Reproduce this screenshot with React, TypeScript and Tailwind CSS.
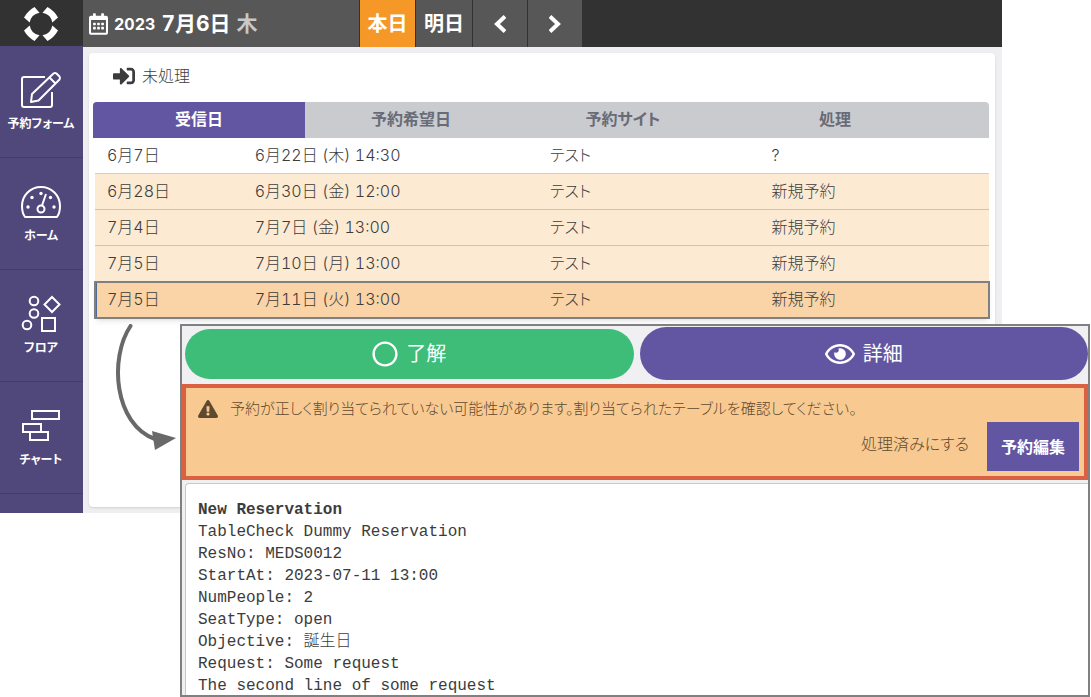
import type { ReactNode } from 'react'
import { FaExclamationTriangle, FaRegCalendarAlt, FaRegCircle, FaRegEye, FaSignInAlt } from 'react-icons/fa'

const rows = [
  { received: '6月7日', wanted: '6月22日 (木) 14:30', site: 'テスト', action: '?' },
  { received: '6月28日', wanted: '6月30日 (金) 12:00', site: 'テスト', action: '新規予約' },
  { received: '7月4日', wanted: '7月7日 (金) 13:00', site: 'テスト', action: '新規予約' },
  { received: '7月5日', wanted: '7月10日 (月) 13:00', site: 'テスト', action: '新規予約' },
  { received: '7月5日', wanted: '7月11日 (火) 13:00', site: 'テスト', action: '新規予約' },
]

const message = [
  'TableCheck Dummy Reservation',
  'ResNo: MEDS0012',
  'StartAt: 2023-07-11 13:00',
  'NumPeople: 2',
  'SeatType: open',
  'Objective: 誕生日',
  'Request: Some request',
  'The second line of some request',
]

function Logo() {
  const petal = 'M0 10.500Q4 3.500 10.500 0L15.500 5.700A12 12 0 0 0 5.700 15.500z'
  return (
    <svg viewBox="0 0 34 34" className="size-[34px]" fill="#fff">
      <path d={petal} />
      <path d={petal} transform="rotate(90 17 17)" />
      <path d={petal} transform="rotate(180 17 17)" />
      <path d={petal} transform="rotate(270 17 17)" />
    </svg>
  )
}

function FormIcon() {
  return (
    <svg viewBox="0 0 42 38" className="h-[38px] w-[42px]" fill="none" stroke="#fff" strokeWidth="2" strokeLinejoin="round">
      <path d="M25 7H4a2 2 0 0 0-2 2v26a2 2 0 0 0 2 2h26a2 2 0 0 0 2-2V22" />
      <path d="M11 32l1-8L33.500 3.500q1.500-1 3 0l3 3q1 1.500 0 3L18.500 30.500zM29.500 7.500l6 6" />
    </svg>
  )
}

function GaugeIcon() {
  return (
    <svg viewBox="0 0 42 38" className="h-[38px] w-[42px]" fill="none" stroke="#fff" strokeWidth="2">
      <path d="M5 35Q2 31 2 24a19 19 0 0 1 38 0q0 7-3 11z" strokeLinejoin="round" />
      <circle cx="21" cy="27" r="3.500" />
      <path d="M22 23.500L26 12" />
      <g fill="#fff" stroke="none">
        <circle cx="8" cy="25" r="1.700" />
        <circle cx="12" cy="15.500" r="1.700" />
        <circle cx="21" cy="11.500" r="1.700" />
        <circle cx="30.500" cy="15.500" r="1.700" />
        <circle cx="34" cy="25" r="1.700" />
      </g>
    </svg>
  )
}

function FloorIcon() {
  return (
    <svg viewBox="0 0 42 38" className="h-[38px] w-[42px]" fill="none" stroke="#fff" strokeWidth="2">
      <circle cx="14" cy="7" r="4.300" />
      <circle cx="14" cy="19.500" r="4.300" />
      <circle cx="7" cy="31" r="4.300" />
      <path d="M32 3l7.500 7.500-7.500 7.500-7.500-7.500zM22 24h13v13H22z" />
    </svg>
  )
}

function ChartIcon() {
  return (
    <svg viewBox="0 0 42 38" className="h-[38px] w-[42px]" fill="none" stroke="#fff" strokeWidth="2">
      <path d="M12 5h27v8H12zM3 18h18v8H3zM10 26h18v8H10z" />
    </svg>
  )
}

function Chevron({ d }: { d: string }) {
  return (
    <svg viewBox="0 0 12 20" className="h-5 w-3" fill="none" stroke="#fff" strokeWidth="4">
      <path d={d} />
    </svg>
  )
}

function NavItem({ icon, label }: { icon: ReactNode; label: string }) {
  return (
    <a href="#" className="flex h-28 flex-col items-center gap-1 border-b border-[#433c69] pt-6 pr-px text-xs leading-6 font-bold text-white">
      {icon}
      {label}
    </a>
  )
}

function TopBar() {
  return (
    <header className="flex h-[47px] bg-[#323232] text-xl font-bold text-white">
      <div className="flex w-[83px] items-center justify-center pr-px">
        <Logo />
      </div>
      <div className="flex gap-px">
        <button className="flex w-[276px] items-center gap-1.5 bg-[#575757] pl-1.5 font-bold">
          <FaRegCalendarAlt className="h-[22px] w-[19px]" />
          <span className="text-base">2023</span>
          <span className="text-[21px]">7月6日</span>
          <span className="text-[21px] text-[#c8c8c8]">木</span>
        </button>
        <button className="w-[55px] bg-[#f59827]">本日</button>
        <button className="w-14 bg-[#575757]">明日</button>
        <button aria-label="前の日" className="flex w-[54px] items-center justify-center bg-[#575757]">
          <Chevron d="M11 2.500L3 10l8 7.500" />
        </button>
        <button aria-label="次の日" className="flex w-[54px] items-center justify-center bg-[#575757]">
          <Chevron d="M1 2.500L9 10l-8 7.500" />
        </button>
      </div>
    </header>
  )
}

function ReservationTable() {
  return (
    <table className="mr-1.5 ml-1 block">
      <thead className="block">
        <tr className="grid h-9 grid-cols-[212fr_212fr_212fr_212fr_48fr] overflow-hidden rounded-t-sm bg-[#cacbcf] leading-[34px] text-[#686b78]">
          <th className="bg-[#6256a3] text-white">受信日</th>
          <th>予約希望日</th>
          <th>予約サイト</th>
          <th>処理</th>
        </tr>
      </thead>
      <tbody className="ml-0.5 block">
        {rows.map((row, i) => {
          const selected = i === rows.length - 1
          const tone = selected
            ? 'relative bg-[#fad3a6] outline-2 -outline-offset-1 outline-[#808080] border-l-2 border-[#4f6a94] shadow-md'
            : i === 0
              ? 'border-b border-[#cfcfd2] bg-white pl-0.5'
              : 'border-b border-[#d1c2b0] bg-[#fcead3] pl-0.5'
          return (
            <tr key={i} className={`grid h-9 grid-cols-[148fr_296fr_222fr_228fr] leading-[34px] text-[#3c3c3c] ${tone}`}>
              <td className="pl-2.5">{row.received}</td>
              <td className="pl-2.5">{row.wanted}</td>
              <td className="pl-2.5">{row.site}</td>
              <td className="pl-2.5">{row.action}</td>
            </tr>
          )
        })}
      </tbody>
    </table>
  )
}

function DetailPanel() {
  return (
    <section className="absolute top-[324px] right-px bottom-0 left-[180px] flex flex-col overflow-hidden border-2 border-[#808080] bg-[#f0f0f3]">
      <div className="flex items-center gap-1.5 pt-px pl-[3px] text-xl font-normal text-white">
        <button className="flex h-[50px] flex-1 items-center justify-center gap-2 rounded-full bg-[#3dbd78]">
          <FaRegCircle className="size-[26px]" />
          了解
        </button>
        <button className="flex h-[53px] flex-1 items-center justify-center gap-2 rounded-full bg-[#6256a3]">
          <FaRegEye className="size-[30px]" />
          詳細
        </button>
      </div>
      <div role="alert" className="mt-1 h-24 shrink-0 border-4 border-[#d96043] bg-[#f8ca92] text-[#5f4a2f]">
        <div className="flex h-[34px] items-center gap-3 pt-2 pl-3">
          <FaExclamationTriangle className="h-[18px] w-5" />
          <p className="text-[15px]">予約が正しく割り当てられていない可能性があります。割り当てられたテーブルを確認してください。</p>
        </div>
        <div className="flex items-start justify-end gap-[18px] pr-[5px]">
          <button className="h-11">処理済みにする</button>
          <button className="h-[49px] w-[92px] bg-[#6256a3] font-bold text-white">予約編集</button>
        </div>
      </div>
      <div className="mt-[3px] ml-[3px] flex-1 overflow-hidden rounded-tl border-t border-l border-[#c8c8cc] bg-white pt-[15px] pl-3 font-['Liberation_Mono','Noto_Sans_CJK_JP',monospace] leading-[22px] text-[#3c3c3c]">
        <p className="font-bold">New Reservation</p>
        {message.map(line => <p key={line} className="h-[22px]">{line}</p>)}
      </div>
    </section>
  )
}

export default function App() {
  return (
    <div className="relative min-h-screen overflow-hidden bg-white font-['Inter','Noto_Sans_CJK_JP',sans-serif] text-base font-light [font-feature-settings:'palt','tnum']">
      <div className="mr-[89px]">
        <TopBar />
        <div className="flex bg-[#efeff2]">
          <nav className="-mt-px w-[83px] bg-[#50487a] pb-[19px]">
            <NavItem icon={<FormIcon />} label="予約フォーム" />
            <NavItem icon={<GaugeIcon />} label="ホーム" />
            <NavItem icon={<FloorIcon />} label="フロア" />
            <NavItem icon={<ChartIcon />} label="チャート" />
          </nav>
          <main className="m-1.5 mr-[7px] flex-1 rounded bg-white shadow-sm">
            <h1 className="flex h-[49px] items-center gap-[7px] pb-1 pl-6 text-[#3c3c3c]">
              <FaSignInAlt className="size-[22px]" />
              未処理
            </h1>
            <ReservationTable />
          </main>
        </div>
      </div>
      <svg viewBox="0 0 64 130" className="absolute top-[324px] left-[114px] h-[130px] w-16" fill="none">
        <path d="M16.500 2C-5 34 0 100 41 115" stroke="#696969" strokeWidth="4" strokeLinecap="round" />
        <path d="M38 107l24 7-21 12z" fill="#696969" />
      </svg>
      <DetailPanel />
    </div>
  )
}
